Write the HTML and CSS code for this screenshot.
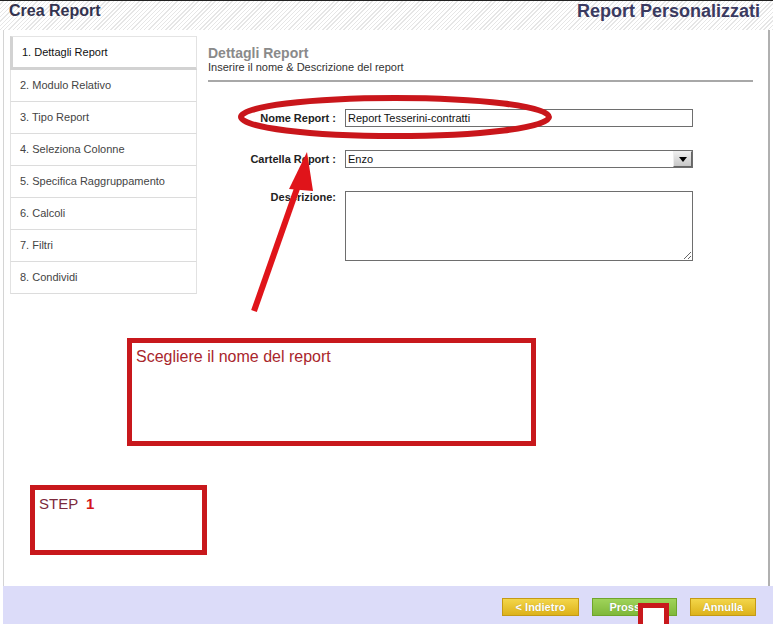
FILE: index.html
```html
<!DOCTYPE html>
<html lang="it">
<head>
    <meta charset="UTF-8">
    <title>Crea Report</title>
    <link rel="stylesheet" href="styles.css">
</head>
<body>
    <div class="page">
        <header class="topbar">
            <h1>Crea Report</h1>
            <h2>Report Personalizzati</h2>
        </header>

        <div class="frame">
            <ul class="steps">
                <li class="active">1. Dettagli Report</li>
                <li>2. Modulo Relativo</li>
                <li>3. Tipo Report</li>
                <li>4. Seleziona Colonne</li>
                <li>5. Specifica Raggruppamento</li>
                <li>6. Calcoli</li>
                <li>7. Filtri</li>
                <li>8. Condividi</li>
            </ul>

            <div class="content">
                <div class="section-title">Dettagli Report</div>
                <div class="section-sub">Inserire il nome &amp; Descrizione del report</div>
                <div class="rule"></div>

                <form class="form">
                    <label class="lbl">Nome Report :</label>
                    <input class="field" type="text" value="Report Tesserini-contratti">

                    <label class="lbl">Cartella Report :</label>
                    <div class="field select">
                        <span>Enzo</span>
                        <span class="arrow"></span>
                    </div>

                    <label class="lbl lbl-top">Descrizione:</label>
                    <textarea class="field area"></textarea>
                </form>
            </div>
        </div>

        <footer class="bottombar">
            <button class="btn gold btn-back">&lt; Indietro</button>
            <button class="btn green btn-next">Prossimo</button>
            <button class="btn gold btn-cancel">Annulla</button>
        </footer>

        <!-- annotazioni sopra lo screenshot -->
        <svg class="marks" width="773" height="624" viewBox="0 0 773 624">
            <ellipse cx="395" cy="117" rx="154" ry="19" fill="none" stroke="#c9161b" stroke-width="6"/>
            <line x1="254" y1="311" x2="300" y2="180" stroke="#e0141a" stroke-width="6"/>
            <polygon points="307,152 289,189 313,191" fill="#e0141a"/>
        </svg>
        <div class="note note-main">Scegliere il nome del report</div>
        <div class="note note-step">STEP <b>1</b></div>
        <div class="note note-small"></div>
    </div>
</body>
</html>
```

FILE: styles.css
```css
body {
    margin: 0;
    font-family: 'Liberation Sans', Arial, sans-serif;
    background: #ffffff;
}

.page {
    position: relative;
    width: 773px;
    height: 624px;
    overflow: hidden;
}

.topbar {
    height: 30px;
    border-top: 1px solid #222;
    box-sizing: border-box;
    display: flex;
    justify-content: space-between;
    align-items: flex-start;
    padding: 0 0 0 9px;
    background: repeating-linear-gradient(135deg, #ffffff 0, #ffffff 2px, #e6e6e6 2px, #e6e6e6 3px);
}

.topbar h1 {
    margin: 0;
    font-size: 16px;
    line-height: 19px;
    color: #33334f;
}

.topbar h2 {
    margin: 0 13px 0 0;
    font-size: 18px;
    line-height: 20px;
    color: #3a3a60;
}

.frame {
    height: 556px;
    margin-left: 3px;
    width: 767px;
    box-sizing: border-box;
    border-left: 1px solid #d4d4d4;
    border-right: 2px solid #b0b0b0;
    display: flex;
    padding: 6px 0 0 6px;
}

.steps {
    list-style: none;
    margin: 0;
    padding: 0;
    width: 187px;
    font-size: 11px;
    color: #444;
}

.steps li {
    height: 31px;
    line-height: 31px;
    padding-left: 9px;
    border-left: 1px solid #e2e2e2;
    border-right: 1px solid #e2e2e2;
    border-bottom: 1px solid #dcdcdc;
}

.steps li.active {
    height: 30px;
    line-height: 30px;
    padding-left: 9px;
    color: #111;
    border-top: 1px solid #e4e4e4;
    border-left: 3px solid #d2d2d2;
    border-bottom: 3px solid #d2d2d2;
}

.content {
    margin-left: 11px;
    width: 545px;
    padding-top: 9px;
}

.section-title {
    font-size: 14px;
    font-weight: bold;
    color: #8a8a8a;
    line-height: 16px;
}

.section-sub {
    font-size: 11px;
    color: #333;
    line-height: 13px;
}

.rule {
    margin-top: 6px;
    height: 2px;
    background: #a8a8a8;
}

.form {
    display: grid;
    grid-template-columns: 128px 348px;
    column-gap: 9px;
    row-gap: 23px;
    margin-top: 27px;
    font-size: 11px;
    color: #222;
}

.lbl {
    text-align: right;
    font-weight: bold;
    align-self: center;
}

.lbl-top {
    align-self: start;
    padding-top: 0;
}

.field {
    box-sizing: border-box;
    height: 18px;
    border: 1px solid #6e6e6e;
    font: 11px 'Liberation Sans', Arial, sans-serif;
    color: #111;
    padding: 0 2px;
    margin: 0;
    background: #fff;
}

.select {
    display: flex;
    align-items: center;
    justify-content: space-between;
    padding-right: 0;
}

.arrow {
    width: 19px;
    height: 16px;
    box-sizing: border-box;
    border: 1px solid #666;
    border-top-color: #eee;
    border-left-color: #eee;
    background: linear-gradient(#eeeeee, #c8c8c8);
    position: relative;
}

.arrow::after {
    content: "";
    position: absolute;
    left: 5px;
    top: 5px;
    border-left: 4px solid transparent;
    border-right: 4px solid transparent;
    border-top: 5px solid #000;
}

.area {
    height: 70px;
    resize: both;
}

.bottombar {
    height: 38px;
    margin-left: 3px;
    background: #dcdcf9;
    display: flex;
    justify-content: flex-end;
    gap: 13px;
    padding: 12px 17px 0 0;
    box-sizing: border-box;
}

.btn {
    height: 18px;
    padding: 0;
    font: bold 11px 'Liberation Sans', Arial, sans-serif;
    color: #fff;
    text-shadow: 0 0 1px rgba(0, 0, 0, 0.25);
    cursor: pointer;
}

.gold {
    background: linear-gradient(#f3d64a, #ddb21a);
    border: 1px solid #c49a14;
}

.green {
    background: linear-gradient(#9fd35a, #7fb83a);
    border: 1px solid #6fa52c;
}

.btn-back { width: 77px; }
.btn-next { width: 85px; }
.btn-cancel { width: 66px; }

.marks {
    position: absolute;
    top: 0;
    left: 0;
    pointer-events: none;
}

.note {
    position: absolute;
    box-sizing: border-box;
    border: 5px solid #c8181c;
    background: #fff;
}

.note-main {
    left: 127px;
    top: 338px;
    width: 409px;
    height: 108px;
    padding: 5px 0 0 4px;
    font-size: 16px;
    color: #a9262c;
}

.note-step {
    left: 30px;
    top: 485px;
    width: 177px;
    height: 70px;
    padding: 5px 0 0 4px;
    font-size: 15px;
    color: #7c2a3c;
}

.note-step b {
    color: #d4161c;
    margin-left: 4px;
}

.note-small {
    left: 638px;
    top: 603px;
    width: 31px;
    height: 30px;
}
```
